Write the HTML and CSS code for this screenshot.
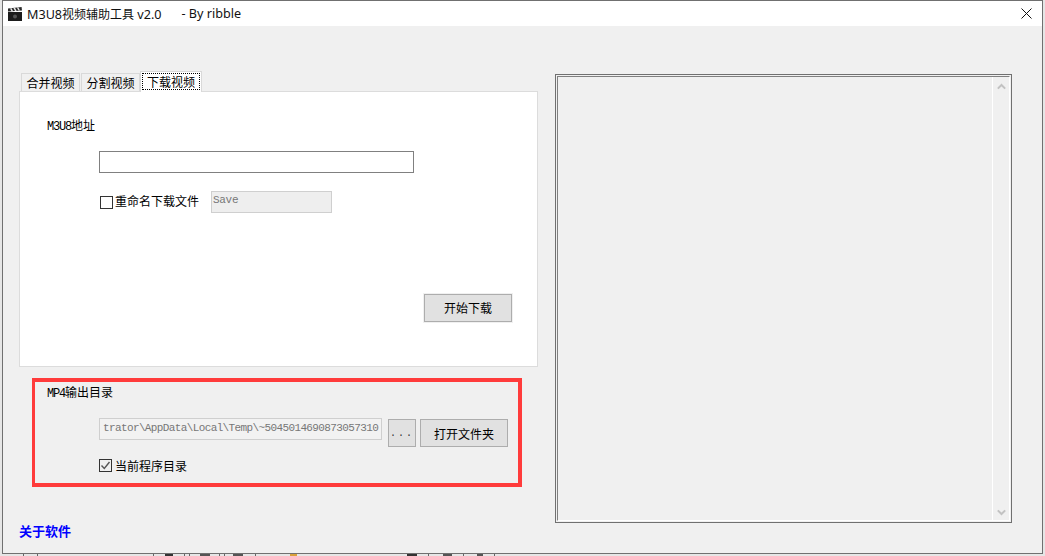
FILE: index.html
```html
<!DOCTYPE html>
<html lang="zh-CN">
<head>
<meta charset="utf-8">
<title>M3U8视频辅助工具 v2.0</title>
<link rel="stylesheet" href="styles.css">
</head>
<body>
<div class="window">
  <header class="titlebar">
    <svg class="app-icon" viewBox="0 0 16 16" width="16" height="16" aria-hidden="true">
      <path d="M1 6h14v9H1z" fill="#1c1c1c"/>
      <path d="M1 2.6 14.6 1l.4 3.4L1 5.6z" fill="#2a2a2a"/>
      <path d="M3 2.4 4.6 5.4h1.6L4.6 2.2zM6.4 2 8 5h1.6L8 1.8zM9.8 1.6l1.6 3h1.6l-1.6-3.2z" fill="#e8e8e8"/>
      <circle cx="8" cy="10.5" r="2" fill="#555"/>
    </svg>
    <span class="title-main">M3U8<span class="title-cjk">视频辅助工具</span> v2.0</span>
    <span class="title-by">- By ribble</span>
    <svg class="close-icon" viewBox="0 0 11 11" width="11" height="11" aria-hidden="true">
      <path d="M.5.5l10 10M10.5.5l-10 10" stroke="#111" stroke-width="1" fill="none"/>
    </svg>
  </header>
  <main class="content">
    <section class="left">
      <nav class="tabs">
        <span class="tab">合并视频</span>
        <span class="tab tab-second">分割视频</span>
        <span class="tab tab-active"><span class="tab-focus">下载视频</span></span>
      </nav>
      <div class="panel">
        <div class="label">M3U8<span class="cjk">地址</span></div>
        <div class="textbox"></div>
        <div class="rename-row">
          <span class="check"></span>
          <span class="check-text">重命名下载文件</span>
          <span class="save-field">Save</span>
        </div>
        <div class="action-row"><button class="btn btn-default">开始下载</button></div>
      </div>
      <div class="output-box">
        <div class="label">MP4<span class="cjk">输出目录</span></div>
        <div class="path-row">
          <span class="path-field">trator\AppData\Local\Temp\~5045014690873057310</span>
          <button class="btn btn-dots">...</button>
          <button class="btn">打开文件夹</button>
        </div>
        <div class="current-row">
          <span class="check check-on">
            <svg viewBox="0 0 11 11" width="11" height="11" aria-hidden="true"><path d="M1.5 5.5 4.3 8.5 9.5 2" stroke="#555" stroke-width="1.4" fill="none"/></svg>
          </span>
          <span class="check-text">当前程序目录</span>
        </div>
      </div>
      <a class="about">关于软件</a>
    </section>
    <aside class="log">
      <div class="log-inner">
        <div class="log-text"></div>
        <div class="scrollbar">
          <svg viewBox="0 0 9 7" width="9" height="7" aria-hidden="true"><path d="M.8 5.6 4.5 2l3.7 3.6" stroke="#c2c2c2" stroke-width="2" fill="none"/></svg>
          <svg viewBox="0 0 9 7" width="9" height="7" aria-hidden="true"><path d="M.8 1.4 4.5 5l3.7-3.6" stroke="#c2c2c2" stroke-width="2" fill="none"/></svg>
        </div>
      </div>
    </aside>
  </main>
</div>
<div class="behind-strip"></div>
</body>
</html>
```
FILE: styles.css
```css
* { box-sizing: border-box; }
html, body { margin: 0; padding: 0; }
body {
  width: 1045px;
  height: 556px;
  overflow: hidden;
  background: #e6e6e6;
  padding: 0 2px;
  font-family: "Noto Sans CJK SC", "Liberation Sans", sans-serif;
  font-size: 12px;
  color: #000;
}
.window {
  width: 1041px;
  height: 554px;
  border: 1px solid #707070;
  display: flex;
  flex-direction: column;
  background: #f0f0f0;
}
.behind-strip {
  height: 2px;
  background: linear-gradient(90deg,
    #e6e6e6 21px, #666 21px, #666 22px, #e6e6e6 22px,
    #e6e6e6 35px, #666 35px, #666 36px, #e6e6e6 36px,
    #e6e6e6 151px, #666 151px, #666 152px, #e6e6e6 152px,
    #e6e6e6 163px, #333 163px, #333 171px, #e6e6e6 171px,
    #e6e6e6 182px, #666 182px, #666 183px, #e6e6e6 183px,
    #e6e6e6 187px, #666 187px, #666 188px, #e6e6e6 188px,
    #e6e6e6 198px, #555 198px, #555 208px, #e6e6e6 208px,
    #e6e6e6 217px, #666 217px, #666 218px, #e6e6e6 218px,
    #e6e6e6 222px, #666 222px, #666 223px, #e6e6e6 223px,
    #e6e6e6 231px, #555 231px, #555 241px, #e6e6e6 241px,
    #e6e6e6 253px, #666 253px, #666 254px, #e6e6e6 254px,
    #e6e6e6 288px, #d9a03a 288px, #d9a03a 295px, #e6e6e6 295px,
    #e6e6e6 405px, #333 405px, #333 415px, #e6e6e6 415px,
    #e6e6e6 426px, #666 426px, #666 427px, #e6e6e6 427px,
    #e6e6e6 441px, #555 441px, #555 450px, #e6e6e6 450px,
    #e6e6e6 461px, #666 461px, #666 462px, #e6e6e6 462px,
    #e6e6e6 475px, #555 475px, #555 481px, #e6e6e6 481px,
    #e6e6e6 492px, #666 492px, #666 493px, #e6e6e6 493px);
}
.titlebar {
  height: 25px;
  flex: none;
  background: #fff;
  display: flex;
  align-items: center;
  padding: 0 10px 0 4px;
  font-family: "Noto Sans", "Noto Sans CJK SC", sans-serif;
  font-size: 12.6px;
  color: #111;
}
.title-cjk { font-family: "Noto Sans CJK SC", sans-serif; font-size: 12px; }
.app-icon { flex: none; margin-right: 4px; }
.title-by { margin-left: 20px; }
.close-icon { margin-left: auto; }
.content {
  flex: 1;
  display: flex;
  padding: 0 31px 0 16px;
  justify-content: space-between;
}
.left { width: 519px; padding-top: 45px; }
.tabs {
  height: 20px;
  display: flex;
  align-items: flex-end;
  padding-left: 2px;
}
.tab {
  width: 59px;
  height: 18px;
  border: 1px solid #d9d9d9;
  border-bottom: 0;
  text-align: center;
  line-height: 18px;
  background: #f0f0f0;
}
.tab-second { margin-left: 1px; }
.tab-active {
  width: 62px;
  height: 21px;
  margin-bottom: -1px;
  padding: 1px;
  background: #fff;
  position: relative;
  z-index: 1;
}
.tab-focus {
  display: block;
  height: 17px;
  line-height: 15px;
  border: 1px dotted #000;
}
.panel {
  height: 276px;
  background: #fff;
  border: 1px solid #dcdcdc;
  padding: 25px 25px 0 27px;
}
.label {
  height: 16px;
  line-height: 16px;
  font-family: "Liberation Mono", monospace;
  font-size: 12px;
  letter-spacing: -1.2px;
}
.cjk { font-family: "Noto Sans CJK SC", sans-serif; font-size: 12px; letter-spacing: 0; }
.textbox {
  width: 315px;
  height: 22px;
  margin: 18px 0 0 52px;
  border: 1px solid #808080;
  background: #fff;
}
.rename-row {
  display: flex;
  align-items: center;
  height: 22px;
  margin: 18px 0 0 53px;
}
.check {
  width: 13px;
  height: 13px;
  border: 1px solid #333;
  background: #fff;
  flex: none;
}
.check-text { margin-left: 2px; line-height: 16px; }
.rename-row .check-text { padding-bottom: 2px; }
.save-field {
  width: 121px;
  height: 22px;
  margin-left: 12px;
  border: 1px solid #cfcfcf;
  background: #eee;
  padding-left: 1px;
  font-family: "Liberation Mono", monospace;
  font-size: 11px;
  letter-spacing: -0.3px;
  line-height: 17px;
  color: #777;
}
.action-row { display: flex; justify-content: flex-end; margin-top: 81px; }
.btn {
  width: 88px;
  height: 28px;
  padding: 0;
  background: #e1e1e1;
  border: 1px solid #adadad;
  border-radius: 0;
  font: inherit;
  color: #000;
}
.btn-default { box-shadow: 0 0 0 1px #f0f0f0; padding-bottom: 2px; }
.btn-dots {
  width: 28px;
  margin: 0 4px 0 6px;
  font-family: "Liberation Mono", monospace;
  font-size: 10px;
  letter-spacing: 2px;
  color: #333;
}
.output-box {
  width: 490px;
  height: 109px;
  margin: 11px 0 0 13px;
  border: solid #ff3b3b;
  border-width: 4px 4px 4px 3px;
  padding: 2px 0 0 12px;
}
.path-row { display: flex; align-items: flex-start; margin: 18px 0 0 52px; }
.path-row .btn { margin-top: 1px; }
.path-row .btn-dots { margin: 1px 4px 0 6px; }
.path-field {
  width: 283px;
  height: 22px;
  border: 1px solid #cfcfcf;
  padding-left: 3px;
  white-space: nowrap;
  overflow: hidden;
  font-family: "Liberation Mono", monospace;
  font-size: 11px;
  letter-spacing: -0.62px;
  line-height: 19px;
  color: #777;
  background: #f2f2f2;
}
.current-row {
  display: flex;
  align-items: center;
  margin: 12px 0 0 52px;
  height: 13px;
}
.check-on { background: #f0f0f0; display: block; }
.check-on svg { display: block; }
.current-row .check-text { margin-left: 3px; }
.about {
  display: block;
  margin-top: 35px;
  height: 18px;
  line-height: 18px;
  color: #00f;
  font-size: 13px;
  font-weight: 700;
}
.log {
  width: 457px;
  height: 449px;
  margin: 48px -1px 0 0;
  border: 1px solid #707070;
  padding: 1px;
  display: flex;
}
.log-inner {
  flex: 1;
  display: flex;
  border: 1px solid;
  border-color: #808080 #fff #fff #808080;
}
.log-text { flex: 1; border-right: 1px solid #fff; }
.scrollbar {
  width: 16px;
  flex: none;
  display: flex;
  flex-direction: column;
  align-items: center;
  justify-content: space-between;
  padding: 6px 0 4px;
}
```
